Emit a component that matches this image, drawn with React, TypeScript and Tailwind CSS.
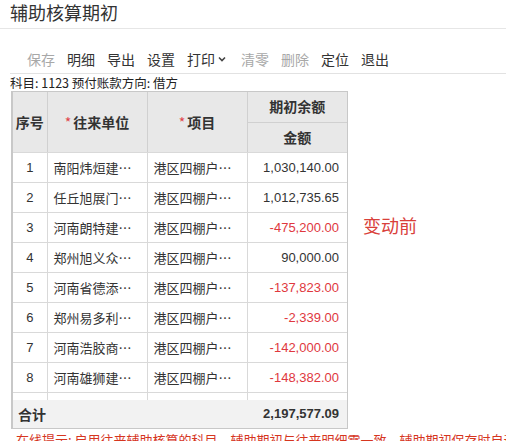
import React from 'react';

interface Row {
  no: number;
  unit: string;
  item: string;
  amount: string;
  negative?: boolean;
}

const rows: Row[] = [
  { no: 1, unit: '南阳炜烜建…', item: '港区四棚户…', amount: '1,030,140.00' },
  { no: 2, unit: '任丘旭展门…', item: '港区四棚户…', amount: '1,012,735.65' },
  { no: 3, unit: '河南朗特建…', item: '港区四棚户…', amount: '-475,200.00', negative: true },
  { no: 4, unit: '郑州旭义众…', item: '港区四棚户…', amount: '90,000.00' },
  { no: 5, unit: '河南省德添…', item: '港区四棚户…', amount: '-137,823.00', negative: true },
  { no: 6, unit: '郑州易多利…', item: '港区四棚户…', amount: '-2,339.00', negative: true },
  { no: 7, unit: '河南浩胶商…', item: '港区四棚户…', amount: '-142,000.00', negative: true },
  { no: 8, unit: '河南雄狮建…', item: '港区四棚户…', amount: '-148,382.00', negative: true },
  { no: 9, unit: '河南中恒建…', item: '港区四棚户…', amount: '-30,000.00', negative: true },
];

const toolbar = [
  { label: '保存', disabled: true },
  { label: '明细' },
  { label: '导出' },
  { label: '设置' },
  { label: '打印', menu: true },
  { label: '清零', disabled: true },
  { label: '删除', disabled: true },
  { label: '定位' },
  { label: '退出' },
];

const cjk = "font-['Microsoft_YaHei','Noto_Sans_CJK_SC',sans-serif]";
const num = "font-['Liberation_Sans','Noto_Sans_CJK_SC',sans-serif]";

export default function App() {
  return (
    <div className={`w-[506px] h-[441px] overflow-hidden bg-white text-[#333] ${cjk}`}>
      {/* Title */}
      <div className="h-[29px] border-b border-[#e6e6e6] pl-[10px] text-[18px] leading-[24px] text-[#333]">
        辅助核算期初
      </div>

      {/* Toolbar */}
      <div className="ml-[10px] mt-[20px] flex h-[25px] items-start border-b border-[#e2e2e2] pl-[17px]">
        {toolbar.map((t) => (
          <div
            key={t.label}
            className={`mr-[12px] flex items-center text-[14px] leading-[20px] ${t.disabled ? 'text-[#a8a8a8]' : 'text-[#333]'}`}
          >
            {t.label}
            {t.menu && (
              <svg width="10" height="10" viewBox="0 0 10 10" className="ml-[2px] mr-[2px]">
                <path d="M2 3.5 L5 6.5 L8 3.5" fill="none" stroke="#444" strokeWidth="1.6" />
              </svg>
            )}
          </div>
        ))}
      </div>

      {/* Subject */}
      <div className="pl-[10px] pt-[1px] text-[12.5px] leading-[16px] text-[#222]">
        科目: 1123 预付账款方向: 借方
      </div>

      {/* Grid */}
      <div className="ml-[11px] w-[337px] border border-l-2 border-[#c8c8c8]">
        <table className="w-[334px] table-fixed border-collapse">
          <colgroup>
            <col className="w-[34px]" />
            <col className="w-[100px]" />
            <col className="w-[100px]" />
            <col className="w-[100px]" />
          </colgroup>
          <thead>
            <tr className="h-[30px] bg-[#e8e8e8] text-[14px] font-bold text-[#333]">
              <th rowSpan={2} className="border-r border-[#d0d0d0] text-center">序号</th>
              <th rowSpan={2} className="border-r border-[#d0d0d0] text-center">
                <span className="mr-[2px] font-normal text-[#e0454b]">*</span>往来单位
              </th>
              <th rowSpan={2} className="border-r border-[#d0d0d0] text-center">
                <span className="mr-[2px] font-normal text-[#e0454b]">*</span>项目
              </th>
              <th className="border-b border-[#d0d0d0] text-center">期初余额</th>
            </tr>
            <tr className="h-[30px] bg-[#e8e8e8] text-[14px] font-bold text-[#333]">
              <th className="text-center">金额</th>
            </tr>
          </thead>
        </table>
        {/* Scrolling body: the 9th row is cut by the footer, as in the screen */}
        <div className="h-[248px] overflow-hidden">
          <table className="w-[334px] table-fixed border-collapse">
            <colgroup>
              <col className="w-[34px]" />
              <col className="w-[100px]" />
              <col className="w-[100px]" />
              <col className="w-[100px]" />
            </colgroup>
            <tbody>
              {rows.map((r) => (
                <tr key={r.no} className="h-[30px] border-t border-[#d9d9d9] text-[13px]">
                  <td className={`border-r border-[#d9d9d9] text-center ${num} text-[#333]`}>{r.no}</td>
                  <td className="border-r border-[#d9d9d9] whitespace-nowrap pl-[6px] text-[#333]">{r.unit}</td>
                  <td className="border-r border-[#d9d9d9] whitespace-nowrap pl-[6px] text-[#333]">{r.item}</td>
                  <td className={`pr-[8px] text-right ${num} ${r.negative ? 'text-[#e0383e]' : 'text-[#333]'}`}>
                    {r.amount}
                  </td>
                </tr>
              ))}
            </tbody>
          </table>
        </div>
        <div className="flex h-[28px] items-center justify-between bg-[#f2f2f2] pl-[5px] pr-[8px] text-[14px] font-bold text-[#333]">
          <span>合计</span>
          <span className={`${num} text-[13px]`}>2,197,577.09</span>
        </div>
      </div>

      {/* Note beside grid */}
      <div className="relative">
        <div className="absolute left-[363px] top-[-216px] text-[18px] leading-[24px] text-[#d9403a]">变动前</div>
      </div>

      {/* Hint */}
      <div className="whitespace-nowrap pl-[16px] pt-[2px] text-[13px] leading-[18px] text-[#d6361f]">
        在线提示: 启用往来辅助核算的科目，辅助期初与往来明细需一致，辅助期初保存时自动生成往来明细
      </div>
    </div>
  );
}
